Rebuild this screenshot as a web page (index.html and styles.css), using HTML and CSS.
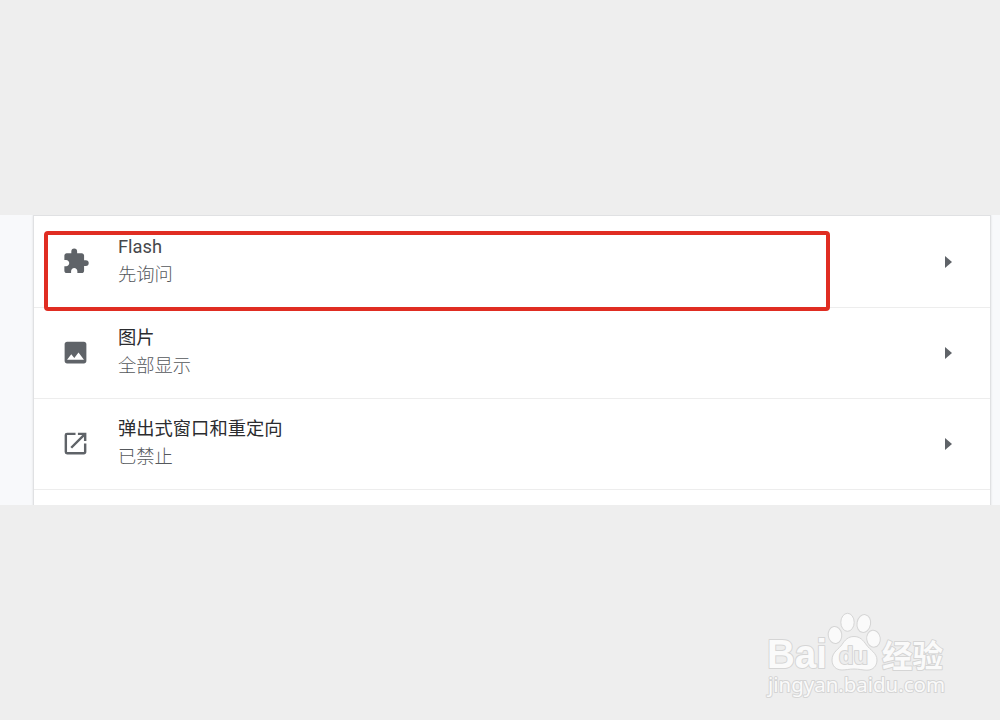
FILE: index.html
```html
<!DOCTYPE html>
<html lang="zh-CN">
<head>
<meta charset="utf-8">
<title>Flash</title>
<link rel="stylesheet" href="styles.css">
</head>
<body>
<main class="page">
  <section class="settings">
    <div class="card">
      <div class="row">
        <svg class="icon" viewBox="-0.900 -0.400 25 25"><path d="M20.500 11H19V7c0-1.100-.9-2-2-2h-4V3.500a2.500 2.500 0 0 0-5 0V5H4c-1.100 0-1.990.9-1.990 2v3.800H3.500c1.490 0 2.700 1.210 2.700 2.700s-1.210 2.700-2.700 2.700H2V20c0 1.100.9 2 2 2h3.800v-1.500c0-1.490 1.210-2.700 2.700-2.700s2.700 1.210 2.700 2.700V22H17c1.100 0 2-.9 2-2v-4h1.500a2.500 2.500 0 0 0 0-5z"/></svg>
        <div class="label"><div class="title latin">Flash</div><div class="status">先询问</div></div>
        <span class="arrow"></span>
      </div>
      <div class="row">
        <svg class="icon" viewBox="0 0 24 24"><path d="M21 19V5c0-1.100-.9-2-2-2H5c-1.100 0-2 .9-2 2v14c0 1.100.9 2 2 2h14c1.100 0 2-.9 2-2zM8.500 13.500l2.500 3.010L14.500 12l4.500 6H5l3.500-4.500z"/></svg>
        <div class="label"><div class="title">图片</div><div class="status">全部显示</div></div>
        <span class="arrow"></span>
      </div>
      <div class="row">
        <svg class="icon" viewBox="0 0 24 24"><path d="M19 19H5V5h7V3H5a2 2 0 0 0-2 2v14a2 2 0 0 0 2 2h14c1.100 0 2-.9 2-2v-7h-2v7zM14 3v2h3.590l-9.830 9.830 1.410 1.410L19 6.410V10h2V3h-7z"/></svg>
        <div class="label"><div class="title">弹出式窗口和重定向</div><div class="status">已禁止</div></div>
        <span class="arrow"></span>
      </div>
    </div>
    <div class="highlight"></div>
  </section>
  <svg class="watermark" viewBox="750 600 220 110">
    <g class="mark">
      <text class="brand" x="767" y="668" textLength="60" lengthAdjust="spacingAndGlyphs">Bai</text>
      <ellipse cx="835" cy="635" rx="6.800" ry="8.500" transform="rotate(-8 835 635)"/>
      <ellipse cx="847.500" cy="622.300" rx="6.700" ry="9"/>
      <ellipse cx="863.800" cy="623.500" rx="6.800" ry="9" transform="rotate(10 863.800 623.500)"/>
      <ellipse cx="873.500" cy="638.700" rx="6.800" ry="8.500" transform="rotate(-8 873.500 638.700)"/>
      <path d="M854 636.500c-6 0-9 3.500-12 8-3 4.500-10 7.500-10 15.500 0 6 4 10 10 10 4 0 7-1 12-1s9 1.200 13 1.200c6 0 10-4.200 10-10.200 0-7-7-10-10.500-15-3.500-5-6.500-8.500-12.500-8.500z"/>
      <text class="du" x="839" y="664" textLength="29" lengthAdjust="spacingAndGlyphs">du</text>
      <text class="jingyan" x="882" y="667" textLength="61" lengthAdjust="spacingAndGlyphs">经验</text>
      <text class="site" x="768" y="692" textLength="177" lengthAdjust="spacingAndGlyphs">jingyan.baidu.com</text>
    </g>
  </svg>
</main>
</body>
</html>
```
FILE: styles.css
```css
body { margin: 0; background: #eee; }
.page { position: relative; box-sizing: border-box; height: 720px; padding-top: 215px; overflow: hidden; }
.settings { position: relative; box-sizing: border-box; height: 290px; padding: 1px 10px 0 34px; background: #f8f9fb; overflow: hidden; }
.card { box-sizing: border-box; height: 300px; padding-top: 1px; background: #fff; box-shadow: 0 0 0 1px #e0e1e3, 0 0 2px 1px #dcdde0; }
.row { box-sizing: border-box; display: flex; align-items: center; height: 91px; padding: 0 38px 0 27px; border-bottom: 1px solid #ededed; }
.icon { width: 29px; height: 29px; margin: -1px 28px 0 0; fill: #5f6368; }
.label { flex: 1; margin-top: -2px; font: 18.300px/28px Roboto, "Noto Sans CJK SC", sans-serif; }
.title { color: #2b2c2f; }
.latin { color: #46484b; }
.status { color: #55585c; font-weight: 300; }
.arrow { border-left: 7px solid #5f6368; border-top: 6px solid transparent; border-bottom: 6px solid transparent; }
.highlight { position: absolute; left: 44px; top: 16px; box-sizing: border-box; width: 786px; height: 80px; border: 4px solid #e02d22; border-radius: 4px; }
.watermark { position: absolute; left: 750px; top: 600px; width: 220px; height: 110px; }
.mark { fill: #fafafa; stroke: #d5d5d5; stroke-width: 1; }
.mark text { paint-order: stroke; stroke-width: 2; stroke-linejoin: round; }
.brand { font: bold 40px "Liberation Sans", sans-serif; }
.mark .du { font: bold 23px "Liberation Sans", sans-serif; fill: #ededed; }
.jingyan { font: bold 31px "Noto Sans CJK SC", sans-serif; }
.site { font: 20px "Noto Sans", sans-serif; }
```
